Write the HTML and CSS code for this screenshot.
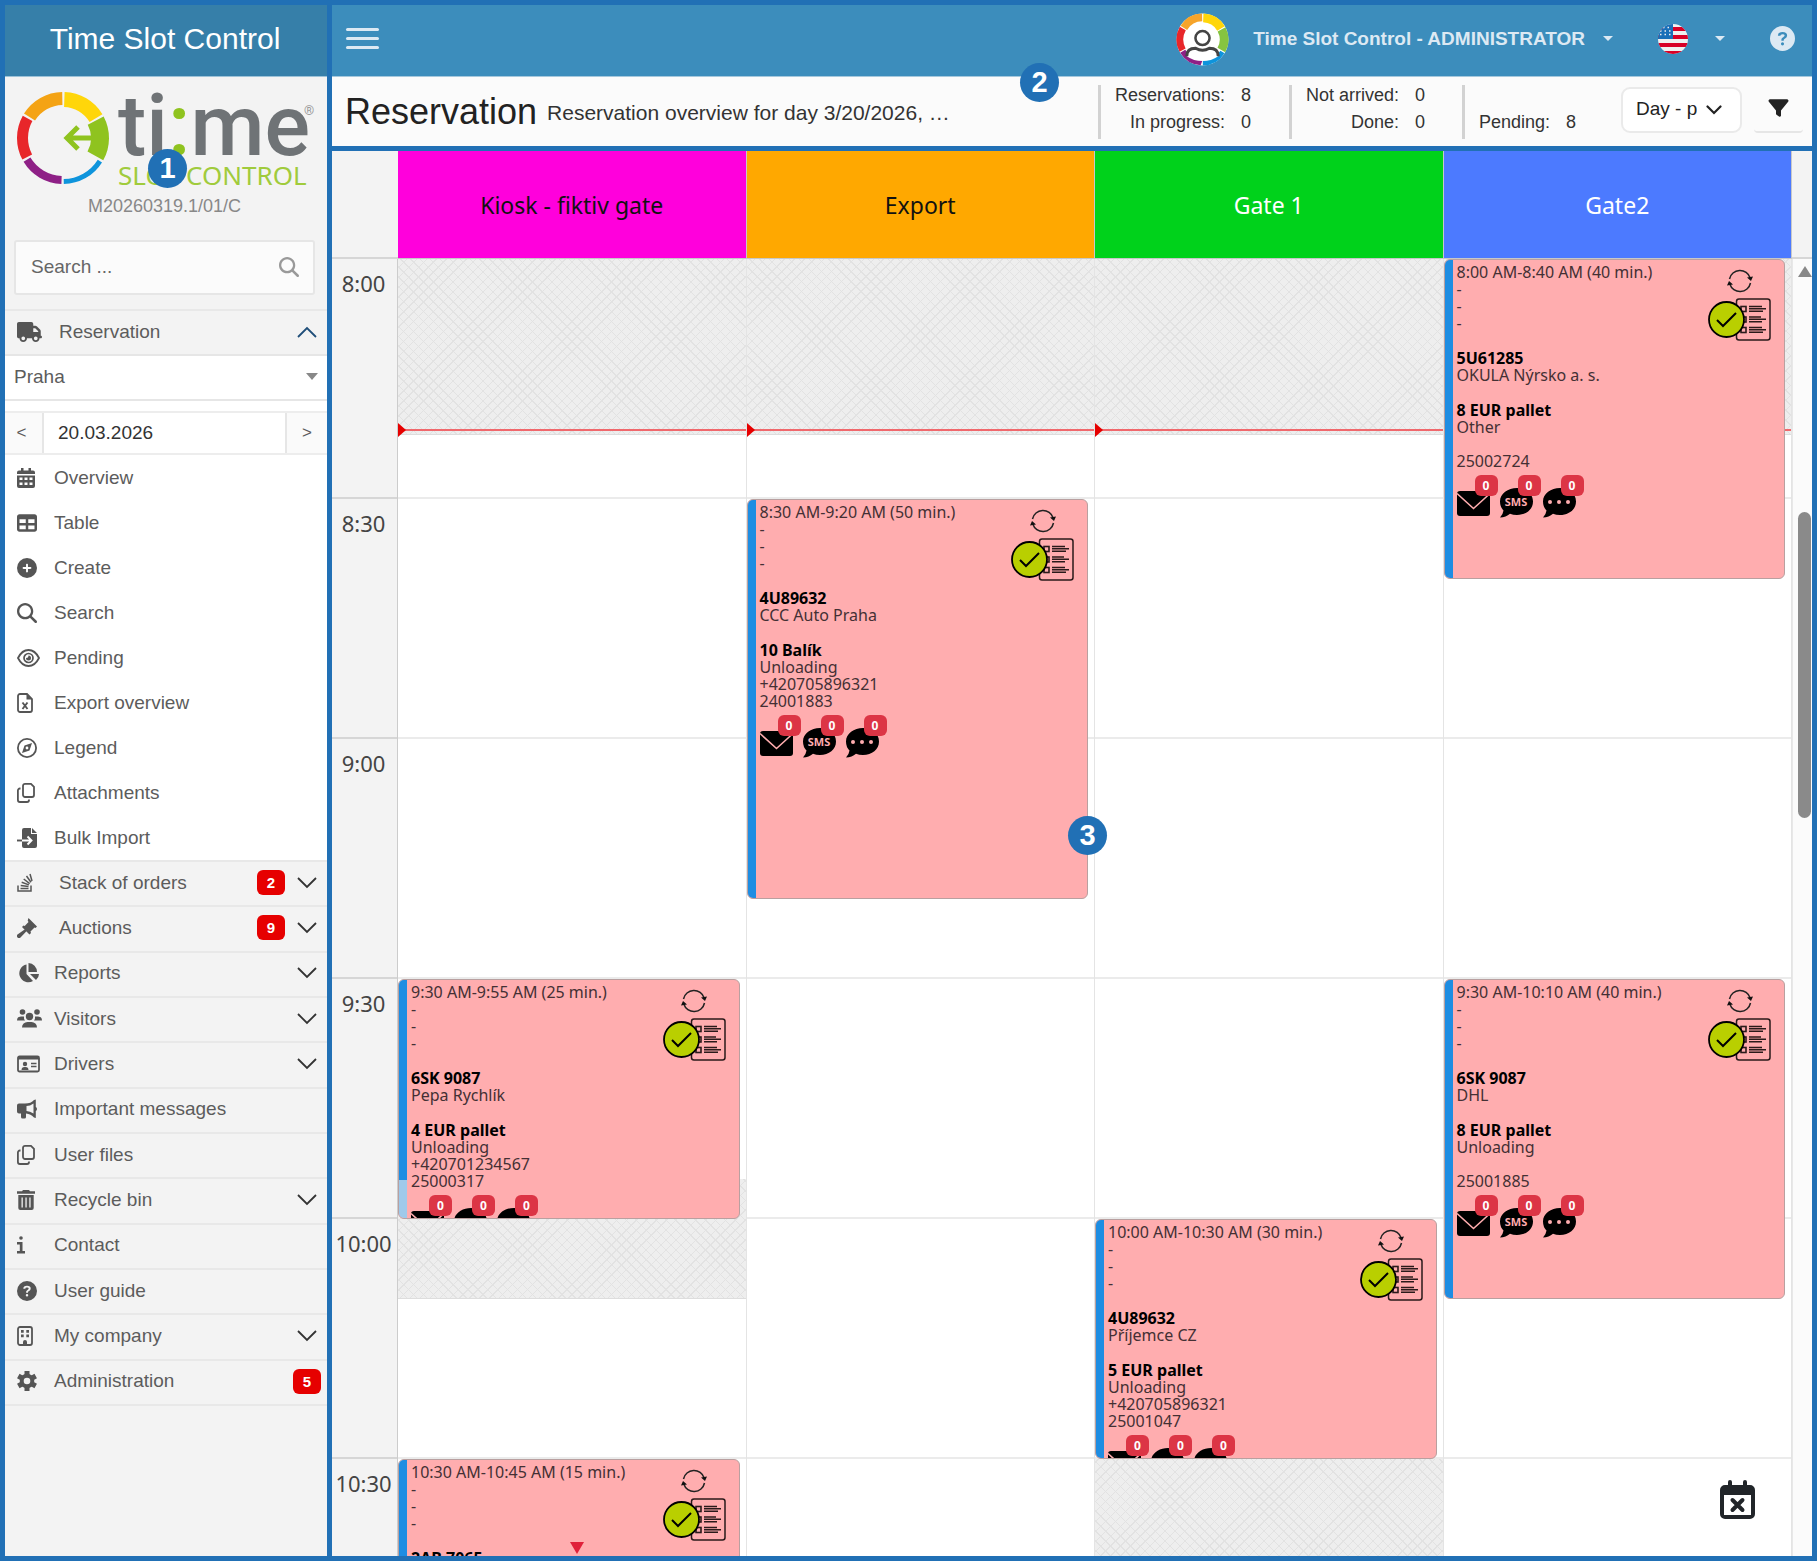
FILE: index.html
```html
<!DOCTYPE html>
<html lang="en">
  <head>
    <meta charset="UTF-8" />
    <meta name="viewport" content="width=device-width, initial-scale=1" />
    <title>Time Slot Control</title>
    <link rel="stylesheet" href="styles.css">
  </head>
  <body>
    <!-- Icon sprite -->
    <svg class="sprite" aria-hidden="true">
      <symbol id="i-truck" viewBox="0 0 640 512" preserveAspectRatio="xMinYMid"><path d="M48 0C21.5 0 0 21.5 0 48V368c0 26.5 21.5 48 48 48H64c0 53 43 96 96 96s96-43 96-96H384c0 53 43 96 96 96s96-43 96-96h32c17.7 0 32-14.3 32-32s-14.3-32-32-32V237.3c0-17-6.7-33.3-18.7-45.3L512 114.7c-12-12-28.3-18.7-45.3-18.7H416V48c0-26.5-21.5-48-48-48H48zM416 160h50.7L544 237.3V256H416V160zM112 416a48 48 0 1 1 96 0 48 48 0 1 1-96 0zm368-48a48 48 0 1 1 0 96 48 48 0 1 1 0-96z"/></symbol>
      <symbol id="i-calendar" viewBox="0 0 18 20" preserveAspectRatio="xMinYMid"><path fill-rule="evenodd" d="M4 0h2.500v2.500h5V0H14v2.500h2a2 2 0 0 1 2 2V6H0V4.500a2 2 0 0 1 2-2h2zM0 7.500h18V18a2 2 0 0 1-2 2H2a2 2 0 0 1-2-2zM2.500 9.500v2.500h3V9.500zm5 0v2.500h3V9.500zm5 0v2.500h3V9.500zm-10 5V17h3v-2.500zm5 0V17h3v-2.500zm5 0V17h3v-2.500z"/></symbol>
      <symbol id="i-table" viewBox="0 0 512 512" preserveAspectRatio="xMinYMid"><path d="M64 256V160H224v96H64zm0 64H224v96H64V320zm224 96V320H448v96H288zM448 256H288V160H448v96zM64 32C28.700 32 0 60.700 0 96V416c0 35.300 28.700 64 64 64H448c35.300 0 64-28.700 64-64V96c0-35.300-28.700-64-64-64H64z"/></symbol>
      <symbol id="i-plus" viewBox="0 0 512 512" preserveAspectRatio="xMinYMid"><path d="M256 512A256 256 0 1 0 256 0a256 256 0 1 0 0 512zM232 344V280H168c-13.300 0-24-10.700-24-24s10.700-24 24-24h64V168c0-13.300 10.700-24 24-24s24 10.700 24 24v64h64c13.300 0 24 10.700 24 24s-10.700 24-24 24H280v64c0 13.300-10.700 24-24 24s-24-10.700-24-24z"/></symbol>
      <symbol id="i-search" viewBox="0 0 512 512" preserveAspectRatio="xMinYMid"><path d="M416 208c0 45.900-14.900 88.300-40 122.700L502.600 457.400c12.500 12.500 12.500 32.800 0 45.300s-32.800 12.500-45.300 0L330.700 376c-34.400 25.200-76.800 40-122.700 40C93.100 416 0 322.900 0 208S93.100 0 208 0S416 93.100 416 208zM208 358a150 150 0 1 0 0-300 150 150 0 1 0 0 300z"/></symbol>
      <symbol id="i-eye" viewBox="0 0 23 20" preserveAspectRatio="xMinYMid"><path d="M1 10Q5 2 11.500 2T22 10Q18 18 11.500 18T1 10z" fill="none" stroke="currentColor" stroke-width="1.800"/><circle cx="11.500" cy="10" r="4.500" fill="none" stroke="currentColor" stroke-width="1.700"/><path d="M11.500 7.500a2.500 2.500 0 1 1-2.500 2.500q2.500 0 2.500-2.500z"/></symbol>
      <symbol id="i-excel" viewBox="0 0 16 20" preserveAspectRatio="xMinYMid"><path d="M3 1h7l5 5v11a2 2 0 0 1-2 2H3a2 2 0 0 1-2-2V3a2 2 0 0 1 2-2z" fill="none" stroke="currentColor" stroke-width="1.800"/><path d="M9.500 1v5.500H15z"/><path d="M5.500 9.500l5 6.500M10.500 9.500l-5 6.500" stroke="currentColor" stroke-width="1.900"/></symbol>
      <symbol id="i-compass" viewBox="0 0 20 20" preserveAspectRatio="xMinYMid"><circle cx="10" cy="10" r="9.100" fill="none" stroke="currentColor" stroke-width="1.800"/><path fill-rule="evenodd" d="M15 5l-2.500 7.500L5 15l2.500-7.500zM10 8.600a1.400 1.400 0 1 0 0 2.800 1.400 1.400 0 0 0 0-2.800z"/></symbol>
      <symbol id="i-copy" viewBox="0 0 18 20" preserveAspectRatio="xMinYMid"><path d="M8 .9h6l3 3V12a2 2 0 0 1-2 2H8a2 2 0 0 1-2-2V2.900a2 2 0 0 1 2-2zM3.500 5.500H2.900a2 2 0 0 0-2 2V17a2 2 0 0 0 2 2H10a2 2 0 0 0 2-2v-.5" fill="none" stroke="currentColor" stroke-width="1.800"/></symbol>
      <symbol id="i-import" viewBox="0 0 20 20" preserveAspectRatio="xMinYMid"><path d="M7 0h7v6h6v12a2 2 0 0 1-2 2H7a2 2 0 0 1-2-2V2a2 2 0 0 1 2-2zM15 0l5 5h-5z"/><path d="M5 12.500h9M10.500 8.500l4 4-4 4" fill="none" stroke="#fff" stroke-width="1.900"/><path d="M0 12.500h5" stroke="currentColor" stroke-width="1.900"/></symbol>
      <symbol id="i-stack" viewBox="0 0 16 20" preserveAspectRatio="xMinYMid"><path d="M1 12.500V18h13v-5.500M3.500 15.500h8M3.700 12.500l7.800 1M4.700 9.200l7.200 2.700M6.700 6l6 4.600M9.500 3l4.500 6.200M13 1l2 7" fill="none" stroke="currentColor" stroke-width="1.500"/></symbol>
      <symbol id="i-gavel" viewBox="0 0 20 20" preserveAspectRatio="xMinYMid"><path d="M11.500 0l8.500 8.500-1.500 1.500-1-.5-4 4 .5 1.500-1.500 1.500L5 9l1.500-1.500 1.200.5 3.800-4-.8-1.500zM8 11.200L9.700 13 3.500 19.500a1.800 1.800 0 0 1-3-3z"/></symbol>
      <symbol id="i-pie" viewBox="0 0 22 20" preserveAspectRatio="xMinYMid"><path d="M9.500 1.500V11l6.500 7A9 9 0 1 1 9.500 1.500zM11.500 0A9 9 0 0 1 20 9h-8.500zM13 11h9a8 8 0 0 1-3 6z"/></symbol>
      <symbol id="i-users" viewBox="0 0 25 20" preserveAspectRatio="xMinYMid"><circle cx="5.500" cy="3" r="2.800"/><circle cx="20" cy="3" r="2.800"/><circle cx="12.500" cy="7.500" r="3.700"/><path d="M0 11.500a4 4 0 0 1 4-4h3a5 5 0 0 0 1 4zM25 11.500a4 4 0 0 0-4-4h-3a5 5 0 0 1-1 4zM5 18.500a5.500 5.500 0 0 1 5.500-5.500h4a5.500 5.500 0 0 1 5.500 5.500z"/></symbol>
      <symbol id="i-card" viewBox="0 0 23 20" preserveAspectRatio="xMinYMid"><rect x="1" y="2.500" width="21" height="15" rx="1.500" fill="none" stroke="currentColor" stroke-width="1.800"/><path d="M1 2.500h21v3H1zM4.500 16a3 3 0 0 1 3-3h1a3 3 0 0 1 3 3z"/><circle cx="8" cy="10" r="2.200"/><path d="M14 9.500h5.500M14 12.500h5.500" stroke="currentColor" stroke-width="1.500"/></symbol>
      <symbol id="i-horn" viewBox="0 0 20 20" preserveAspectRatio="xMinYMid"><path fill-rule="evenodd" d="M17 1l1.800-.5V8q1.200.5 1.200 2t-1.200 2v7L17 18.500q-3-3.500-8-4V18a1.500 1.500 0 0 1-1.500 1.500h-2A1.500 1.500 0 0 1 4 18v-3.500H2a2 2 0 0 1-2-2V6.500a2 2 0 0 1 2-2h6q6 0 9-3.500zm-.5 3.500Q13 7 9.500 7v5q3.500 0 7 2.500z"/></symbol>
      <symbol id="i-trash" viewBox="0 0 18 20" preserveAspectRatio="xMinYMid"><path fill-rule="evenodd" d="M6 0h6l1 1.300h5v2.500H0V1.300h5zM1.300 5h15.400v13a2 2 0 0 1-2 2H3.300a2 2 0 0 1-2-2zM4.500 7.500v10h1.300v-10zm3.900 0v10h1.300v-10zm3.900 0v10h1.300v-10z"/></symbol>
      <symbol id="i-info" viewBox="0 0 8 20" preserveAspectRatio="xMinYMid"><circle cx="4" cy="3" r="1.800"/><path d="M0 7h5.500v9H8v2.500H0V16h2.800V9.500H0z"/></symbol>
      <symbol id="i-help" viewBox="0 0 20 20" preserveAspectRatio="xMinYMid"><path fill-rule="evenodd" d="M10 0a10 10 0 1 1 0 20 10 10 0 0 1 0-20zM6.300 7.800h2q0-1.300 1.700-1.300t1.700 1.100q0 .7-1.200 1.300-1.400.8-1.400 1.900v.9H11v-.6q0-.5 1.100-1.100 1.600-1 1.600-2.500Q13.700 4.700 10 4.700T6.300 7.800zM10 13a1.200 1.200 0 1 0 0 2.500 1.200 1.200 0 0 0 0-2.500z"/></symbol>
      <symbol id="i-building" viewBox="0 0 16 20" preserveAspectRatio="xMinYMid"><rect x="1" y="1" width="14" height="18" rx="2" fill="none" stroke="currentColor" stroke-width="1.800"/><path d="M4 4h2.700v2.700H4zM9.300 4H12v2.700H9.300zM4 8.500h2.700v2.700H4zM9.300 8.500H12v2.700H9.300zM6 19v-3a2 2 0 0 1 4 0v3z"/></symbol>
      <symbol id="i-gear" viewBox="0 0 20 20" preserveAspectRatio="xMinYMid"><circle cx="10" cy="10" r="5.300" fill="none" stroke="currentColor" stroke-width="4"/><path d="M10 0v4M10 16v4M1.300 5l3.500 2M15.200 13l3.500 2M18.700 5l-3.500 2M4.800 13l-3.500 2" stroke="currentColor" stroke-width="5"/></symbol>
      <symbol id="i-filter" viewBox="0 0 512 512"><path d="M3.900 54.900C10.500 40.900 24.500 32 40 32H472c15.500 0 29.500 8.900 36.100 22.900s4.600 30.500-5.200 42.500L320 320.900V448c0 12.100-6.800 23.200-17.700 28.600s-23.800 4.300-33.500-3l-64-48c-8.100-6-12.800-15.500-12.800-25.600V320.900L9 97.300C-.7 85.400-2.800 68.800 3.900 54.900z"/></symbol>
      <symbol id="i-chevron" viewBox="0 0 20 12"><path d="M1 1l9 9 9-9" fill="none" stroke="currentColor" stroke-width="1.800"/></symbol>
      <symbol id="i-chevron-bold" viewBox="0 0 16 10"><path d="M1.500 1.500L8 8l6.500-6.500" fill="none" stroke="currentColor" stroke-width="2.200" stroke-linecap="round"/></symbol>
      <symbol id="i-refresh" viewBox="0 0 26 24"><path d="M2.500 10A10.700 10.700 0 0 1 23.200 9M23.500 14A10.700 10.700 0 0 1 2.800 15" fill="none" stroke="#222" stroke-width="1.500"/><path d="M20 8.500l6-1-2 4.500zM6 15.500l-6 1L2 12z" fill="#111"/></symbol>
      <symbol id="i-checklist" viewBox="0 0 63 43"><rect x="28.500" y="1" width="33.500" height="41" rx="2.500" fill="none" stroke="#2a1a1a" stroke-width="1.500"/><g fill="none" stroke="#2a1a1a" stroke-width="1.600"><rect x="33" y="8.500" width="5" height="5"/><rect x="33" y="19" width="5" height="5"/><rect x="33" y="29.500" width="5" height="5"/><path d="M41 8.500h13M41 10.800h17M41 13.200h14M41 19h12M41 21.300h17M41 23.700h13M41 29.500h13M41 31.800h17M41 34.200h14"/></g><circle cx="18.500" cy="21.500" r="17.500" fill="#b9cf00" stroke="#000" stroke-width="1.800"/><path d="M9 22l6 6 13-13" fill="none" stroke="#000" stroke-width="2"/></symbol>
      <symbol id="i-mail" viewBox="0 0 33 30"><rect y="3" width="33" height="25" rx="3"/><path d="M0 5.500l16.500 15L33 5.500" fill="none" stroke="#ffadaf" stroke-width="1.600"/></symbol>
      <symbol id="i-bubble" viewBox="0 0 33 30"><path d="M17 0c9 0 16 5.500 16 13.500S26 27 17 27q-4 0-7-1.200Q6 29.500 0 29.500q3-3 3.500-7Q0 19 0 13.500C0 5.500 8 0 17 0z"/></symbol>
    </svg>

    <div class="app">
      <nav class="sidebar">
        <div class="brand">Time Slot Control</div>
        <div class="identity">
          <svg class="logo" viewBox="0 0 298 100" role="img" aria-label="time slot control">
            <g transform="translate(46 48)" fill="none">
              <circle r="38.500" stroke="#ffd60a" stroke-width="15" pathLength="360" stroke-dasharray="57 303" transform="rotate(-88)"/>
              <circle r="37" stroke="#8fc31f" stroke-width="18" pathLength="360" stroke-dasharray="57 303" transform="rotate(-28)"/>
              <circle r="43.500" stroke="#0e94dc" stroke-width="5" pathLength="360" stroke-dasharray="57 303" transform="rotate(32)"/>
              <circle r="42" stroke="#8e2086" stroke-width="8" pathLength="360" stroke-dasharray="57 303" transform="rotate(92)"/>
              <circle r="40.500" stroke="#e8262a" stroke-width="11" pathLength="360" stroke-dasharray="57 303" transform="rotate(152)"/>
              <circle r="39.500" stroke="#f4a314" stroke-width="13" pathLength="360" stroke-dasharray="57 303" transform="rotate(212)"/>
              <path d="M32 0H5M15-11L4 0l11 11" stroke="#8fc31f" stroke-width="5"/>
            </g>
            <text class="logo-name" x="101" y="65">ti<tspan class="logo-colon">:</tspan>me</text>
            <text class="logo-reg" x="287" y="25">®</text>
            <text class="logo-sub" x="101" y="95">SLOT CONTROL</text>
          </svg>
          <div class="version">M20260319.1/01/C</div>
          <label class="search">
            <input type="text" placeholder="Search ..." aria-label="Search" />
            <svg class="icon"><use href="#i-search"/></svg>
          </label>
        </div>

        <a class="nav-row open" href="#"><svg class="icon"><use href="#i-truck"/></svg><span class="wide">Reservation</span><svg class="chevron up"><use href="#i-chevron"/></svg></a>
        <div class="panel">
          <div class="place">
            <select aria-label="Place"><option>Praha</option></select>
          </div>
          <div class="date">
            <button>&lt;</button>
            <input type="text" value="20.03.2026" aria-label="Date" />
            <button>&gt;</button>
          </div>
          <a class="sub-row" href="#"><svg class="icon"><use href="#i-calendar"/></svg><span>Overview</span></a>
          <a class="sub-row" href="#"><svg class="icon"><use href="#i-table"/></svg><span>Table</span></a>
          <a class="sub-row" href="#"><svg class="icon"><use href="#i-plus"/></svg><span>Create</span></a>
          <a class="sub-row" href="#"><svg class="icon"><use href="#i-search"/></svg><span>Search</span></a>
          <a class="sub-row" href="#"><svg class="icon"><use href="#i-eye"/></svg><span>Pending</span></a>
          <a class="sub-row" href="#"><svg class="icon"><use href="#i-excel"/></svg><span>Export overview</span></a>
          <a class="sub-row" href="#"><svg class="icon"><use href="#i-compass"/></svg><span>Legend</span></a>
          <a class="sub-row" href="#"><svg class="icon"><use href="#i-copy"/></svg><span>Attachments</span></a>
          <a class="sub-row" href="#"><svg class="icon"><use href="#i-import"/></svg><span>Bulk Import</span></a>
        </div>
        <div class="groups">
          <a class="nav-row" href="#"><svg class="icon"><use href="#i-stack"/></svg><span class="wide">Stack of orders</span><b class="count">2</b><svg class="chevron"><use href="#i-chevron"/></svg></a>
          <a class="nav-row" href="#"><svg class="icon"><use href="#i-gavel"/></svg><span class="wide">Auctions</span><b class="count">9</b><svg class="chevron"><use href="#i-chevron"/></svg></a>
          <a class="nav-row" href="#"><svg class="icon"><use href="#i-pie"/></svg><span>Reports</span><svg class="chevron"><use href="#i-chevron"/></svg></a>
          <a class="nav-row" href="#"><svg class="icon"><use href="#i-users"/></svg><span>Visitors</span><svg class="chevron"><use href="#i-chevron"/></svg></a>
          <a class="nav-row" href="#"><svg class="icon"><use href="#i-card"/></svg><span>Drivers</span><svg class="chevron"><use href="#i-chevron"/></svg></a>
          <a class="nav-row" href="#"><svg class="icon"><use href="#i-horn"/></svg><span>Important messages</span></a>
          <a class="nav-row" href="#"><svg class="icon"><use href="#i-copy"/></svg><span>User files</span></a>
          <a class="nav-row" href="#"><svg class="icon"><use href="#i-trash"/></svg><span>Recycle bin</span><svg class="chevron"><use href="#i-chevron"/></svg></a>
          <a class="nav-row" href="#"><svg class="icon"><use href="#i-info"/></svg><span>Contact</span></a>
          <a class="nav-row" href="#"><svg class="icon"><use href="#i-help"/></svg><span>User guide</span></a>
          <a class="nav-row" href="#"><svg class="icon"><use href="#i-building"/></svg><span>My company</span><svg class="chevron"><use href="#i-chevron"/></svg></a>
          <a class="nav-row end" href="#"><svg class="icon"><use href="#i-gear"/></svg><span>Administration</span><b class="count">5</b></a>
        </div>
        <div class="marker m1">1</div>
      </nav>

      <main class="main">
        <div class="top">
          <header class="topbar">
            <button class="menu" aria-label="Menu"><i></i><i></i><i></i></button>
            <svg class="avatar" viewBox="-27 -27 54 54">
              <circle r="26.500" fill="#fff"/>
              <g fill="none" stroke-width="9">
                <circle r="22" stroke="#ffd60a" pathLength="360" stroke-dasharray="57 303" transform="rotate(-88)"/>
                <circle r="22" stroke="#86c440" pathLength="360" stroke-dasharray="57 303" transform="rotate(-28)"/>
                <circle r="24" stroke="#0e94dc" stroke-width="5" pathLength="360" stroke-dasharray="57 303" transform="rotate(32)"/>
                <circle r="23.500" stroke="#8e2086" stroke-width="6" pathLength="360" stroke-dasharray="57 303" transform="rotate(92)"/>
                <circle r="23" stroke="#e8262a" stroke-width="7" pathLength="360" stroke-dasharray="57 303" transform="rotate(152)"/>
                <circle r="22.500" stroke="#f6a42a" stroke-width="8" pathLength="360" stroke-dasharray="57 303" transform="rotate(212)"/>
              </g>
              <path d="M-16 17C-16 10-11 9-7 9Q0 13 7 9C11 9 16 10 16 17Q9 22 0 22T-16 17z" fill="#fff"/>
              <path d="M-16 17C-16 10-11 9-7 9Q0 13 7 9C11 9 16 10 16 17" fill="none" stroke="#444" stroke-width="3"/>
              <circle cy="-1.500" r="7.200" fill="#fff" stroke="#444" stroke-width="2.600"/>
            </svg>
            <a class="user" href="#">Time Slot Control - ADMINISTRATOR <i class="caret"></i></a>
            <a class="lang" href="#" aria-label="Language">
              <svg class="flag" viewBox="0 0 30 30">
                <clipPath id="round"><circle cx="15" cy="15" r="15"/></clipPath>
                <g clip-path="url(#round)">
                  <path fill="#f0f0f0" d="M0 0h30v30H0z"/>
                  <path stroke="#d80027" stroke-width="4" d="M0 5h30M0 13h30M0 21h30M0 29h30"/>
                  <path fill="#1a6fb8" d="M0 0h15v15H0z"/>
                  <path stroke="#f0f0f0" stroke-width="1.500" stroke-dasharray="1.500 3" d="M2 7h12M5 3.500h9M2 10.500h12"/>
                </g>
              </svg>
              <i class="caret"></i>
            </a>
            <a class="help" href="#" aria-label="Help"><svg><use href="#i-help"/></svg></a>
          </header>
          <div class="subbar">
            <h1>Reservation</h1>
            <p class="subtitle">Reservation overview for day 3/20/2026, …</p>
            <dl class="stats s1">
              <dt>Reservations:</dt><dd>8</dd>
              <dt>In progress:</dt><dd>0</dd>
            </dl>
            <dl class="stats s2">
              <dt>Not arrived:</dt><dd>0</dd>
              <dt>Done:</dt><dd>0</dd>
            </dl>
            <dl class="stats s3">
              <dt>Pending:</dt><dd>8</dd>
            </dl>
            <div class="view">
              <select aria-label="View"><option>Day - places</option></select>
              <svg><use href="#i-chevron-bold"/></svg>
            </div>
            <button class="filter" aria-label="Filter"><svg><use href="#i-filter"/></svg></button>
          </div>
          <div class="marker m2">2</div>
        </div>

        <section class="calendar">
          <div class="cal-head">
            <div class="corner"></div>
            <div class="gate kiosk">Kiosk - fiktiv gate</div>
            <div class="gate export">Export</div>
            <div class="gate gate1">Gate 1</div>
            <div class="gate gate2">Gate2</div>
            <div class="corner-end"></div>
          </div>
          <div class="cal-body">
            <div class="times">
              <div>8:00</div>
              <div>8:30</div>
              <div>9:00</div>
              <div>9:30</div>
              <div>10:00</div>
              <div>10:30</div>
            </div>
            <div class="col"></div>
            <div class="col"></div>
            <div class="col"></div>
            <div class="col"></div>
            <div class="scroll">
              <i class="arrow-up"></i>
              <div class="thumb"></div>
              <i class="arrow-down"></i>
            </div>
          </div>
          <i class="more"></i>
          <button class="no-slot" aria-label="Close day">
            <svg viewBox="0 0 35 39"><path fill-rule="evenodd" d="M8 2a2 2 0 0 1 4 0v3h11V2a2 2 0 0 1 4 0v3h3a5 5 0 0 1 5 5v24a5 5 0 0 1-5 5H5a5 5 0 0 1-5-5V10a5 5 0 0 1 5-5h3zM4 15v20h27V15z"/><path d="M12.500 20l10 10M22.500 20l-10 10" stroke="currentColor" stroke-width="4" stroke-linecap="round"/></svg>
          </button>
          <div class="marker m3">3</div>
        </section>
      </main>
    </div>

    <script src="script.js"></script>
  </body>
</html>
```
FILE: styles.css
```css
* {
  box-sizing: border-box;
}
body {
  margin: 0;
  font-family: "Liberation Sans", Arial, sans-serif;
  font-size: 19px;
  color: #222;
}
a {
  color: inherit;
  text-decoration: none;
}
button,
input,
select {
  font: inherit;
  color: inherit;
  margin: 0;
  border: 0;
  outline: 0;
  background: none;
  appearance: none;
}
.sprite {
  display: none;
}
svg {
  fill: currentColor;
}

/* the blue frame is the background showing through the gaps */
.app {
  display: grid;
  grid-template-columns: 322px minmax(0, 1fr);
  gap: 5px;
  height: 100vh;
  padding: 5px;
  background: #2170b5;
  overflow: hidden;
}

/* Sidebar */
.sidebar {
  position: relative;
  background: #f3f3f3;
  color: #5c5c5c;
  overflow: hidden;
}
.brand {
  height: 72px;
  line-height: 68px;
  padding-right: 2px;
  text-align: center;
  font-size: 30px;
  color: #fff;
  background: #367fa9;
  border-bottom: 1px solid #9cc2d8;
}
.identity {
  height: 232px;
  padding: 13px 12px 0 9px;
}
.logo {
  display: block;
  width: 298px;
  height: 100px;
  margin-left: 3px;
}
.logo-name {
  font: 500 85px Roboto, sans-serif;
  fill: #6f7376;
}
.logo-colon {
  fill: #8fc31f;
}
.logo-reg {
  font: 13px Roboto, sans-serif;
  fill: #999;
}
.logo-sub {
  font: 26px "Noto Sans", sans-serif;
  fill: #a0cb3c;
}
.version {
  margin-top: 6px;
  line-height: 20px;
  text-align: center;
  font-size: 18px;
  color: #888;
}
.search {
  display: flex;
  align-items: center;
  height: 55px;
  margin-top: 24px;
  padding: 0 14px 2px 15px;
  border: 2px solid #e6e6e6;
  border-radius: 3px;
  background: #fbfbfb;
}
.search input {
  flex: 1;
  min-width: 0;
  padding: 0;
}
.search input::placeholder {
  color: #666;
}
.search .icon {
  width: 20px;
  color: #999;
}
.icon {
  flex: none;
  width: 26px;
  height: 20px;
  color: #555;
}
.nav-row,
.sub-row {
  display: flex;
  align-items: center;
  height: 45px;
  padding: 0 10px 2px 12px;
}
.sub-row {
  padding-bottom: 0;
}
.nav-row span,
.sub-row span {
  flex: 1;
  padding-left: 11px;
}
.nav-row span.wide {
  padding-left: 16px;
}
.nav-row {
  height: auto;
  border-top: 2px solid #e8e8e8;
}
.nav-row.open {
  height: 45px;
}
.nav-row.end {
  padding-right: 6px;
}
.chevron {
  width: 20px;
  height: 12px;
  color: #333;
}
.chevron.up {
  transform: rotate(180deg);
  color: #1f4e79;
}
.count {
  width: 28px;
  height: 25px;
  margin-right: 12px;
  border-radius: 6px;
  background: #e60000;
  color: #fff;
  font-size: 15px;
  line-height: 25px;
  text-align: center;
}
.end .count {
  margin-right: 0;
}
.panel {
  background: #fff;
  border-top: 2px solid #e6e6e6;
}
.place {
  position: relative;
  height: 45px;
  border-bottom: 2px solid #e6e6e6;
}
.place select {
  width: 100%;
  height: 100%;
  padding: 0 30px 2px 9px;
}
.place::after {
  content: "";
  position: absolute;
  right: 9px;
  top: 17px;
  border: 6px solid transparent;
  border-top: 7px solid #888;
  border-bottom: 0;
  pointer-events: none;
}
.date {
  display: flex;
  height: 44px;
  margin-top: 10px;
  border-top: 2px solid #ededed;
  border-bottom: 2px solid #ededed;
}
.date button {
  width: 39px;
  padding: 0 4px 0 0;
  font-size: 17px;
  background: #fafafa;
  border-right: 2px solid #e6e6e6;
}
.date button:last-child {
  width: 42px;
  padding: 0;
  border-right: 0;
  border-left: 2px solid #e6e6e6;
}
.date input {
  flex: 1;
  min-width: 0;
  padding: 0 14px;
  color: #333;
}
.groups {
  display: grid;
  grid-auto-rows: 1fr;
  height: 546px;
  border-bottom: 2px solid #e8e8e8;
}

/* Top bar */
.main {
  display: flex;
  flex-direction: column;
  gap: 5px;
  min-height: 0;
}
.top {
  position: relative;
}
.topbar {
  display: flex;
  align-items: center;
  height: 72px;
  padding: 0 17px 4px 14px;
  background: #3c8dbc;
  border-bottom: 1px solid #a5c8dd;
  color: #dce9f3;
}
.menu {
  display: flex;
  flex-direction: column;
  gap: 6px;
  width: 33px;
  padding: 0;
  margin-right: auto;
}
.menu i {
  width: 33px;
  height: 3px;
  border-radius: 2px;
  background: #dce9f3;
}
.avatar {
  width: 53px;
  height: 53px;
  margin: 2px 24px 0 0;
}
.user {
  display: flex;
  align-items: center;
  gap: 18px;
  font-weight: bold;
}
.caret {
  border: 5px solid transparent;
  border-top-color: currentColor;
  border-bottom: 0;
}
.lang {
  display: flex;
  align-items: center;
  gap: 27px;
  margin: 0 45px;
}
.flag {
  width: 30px;
  height: 30px;
}
.help svg {
  display: block;
  width: 25px;
  height: 25px;
}
.subbar {
  display: flex;
  align-items: center;
  height: 69px;
  padding: 0 9px 0 13px;
  background: #fbfbfb;
}
h1 {
  margin: 0 10px 0 0;
  font-size: 36px;
  font-weight: normal;
}
.subtitle {
  flex: 1;
  margin: 2px 0 0;
  font-size: 21px;
  white-space: nowrap;
  color: #333;
}
.stats {
  display: grid;
  grid-template-columns: auto auto;
  align-content: end;
  justify-content: start;
  column-gap: 16px;
  height: 54px;
  margin: 0;
  padding: 0 0 3px 14px;
  border-left: 3px solid #d2d2d2;
  font-size: 18px;
  line-height: 27px;
  text-align: right;
  color: #333;
}
.stats dd {
  margin: 0;
}
.s1 {
  width: 191px;
}
.s2 {
  width: 173px;
}
.s3 {
  width: 159px;
}
.view {
  position: relative;
  width: 121px;
  height: 46px;
  margin: 0 12px 4px 0;
  border: 2px solid #eaeaea;
  border-radius: 9px;
  background: #fff;
}
.view select {
  width: 100%;
  height: 100%;
  padding: 0 43px 2px 13px;
}
.view svg {
  position: absolute;
  right: 18px;
  top: 16px;
  width: 16px;
  height: 10px;
  pointer-events: none;
}
.filter {
  width: 49px;
  height: 46px;
  margin-bottom: 4px;
  padding: 4px 0 0;
  border-bottom: 2px solid #e6e6e6;
  border-radius: 4px;
}
.filter svg {
  width: 21px;
  height: 20px;
}

/* Calendar */
.calendar {
  position: relative;
  flex: 1;
  display: flex;
  flex-direction: column;
  min-height: 0;
  background: #fff;
  overflow: hidden;
  font-family: "Noto Sans", "Open Sans", sans-serif;
}
.cal-head,
.cal-body {
  display: grid;
  grid-template-columns: 66px repeat(4, minmax(0, 1fr)) 20px;
}
.cal-head {
  height: 108px;
}
.cal-body {
  flex: 1;
  min-height: 0;
  overflow: hidden;
}
.corner,
.corner-end {
  background: #f3f3f3;
  border-bottom: 2px solid #d6d6d6;
}
.gate {
  display: flex;
  align-items: center;
  justify-content: center;
  border-right: 1px solid #c8c8c8;
  border-bottom: 1px solid #c8c8c8;
  font-size: 23px;
  color: #111;
}
.kiosk {
  background: #ff00dc;
}
.export {
  background: #ffa800;
}
.gate1 {
  background: #00d21b;
  color: #fff;
}
.gate2 {
  background: #4c7aff;
  color: #fff;
}
.times {
  background: #f3f3f3;
  border-right: 1px solid #ccc;
}
.times div {
  height: 240px;
  padding: 9px 2px 0 0;
  text-align: center;
  font-size: 22px;
  line-height: 30px;
  color: #444;
  border-bottom: 2px solid #d6d6d6;
}
.col {
  position: relative;
  border-right: 1px solid #e4e4e4;
  background: repeating-linear-gradient(#fff 0 238px, #ebebeb 238px 240px);
}
.closed {
  position: absolute;
  left: 0;
  right: 0;
  border-bottom: 1px solid #ddd;
  background:
    repeating-linear-gradient(45deg, transparent 0 6px, #e2e2e2 6px 7px),
    repeating-linear-gradient(-45deg, transparent 0 6px, #e2e2e2 6px 7px),
    #eee;
}
.now {
  position: absolute;
  left: 0;
  right: 0;
  border-top: 2px solid #f0686c;
}
.now::before {
  content: "";
  position: absolute;
  left: 0;
  top: -8px;
  border: 7px solid transparent;
  border-left: 8px solid #e60000;
  border-right: 0;
}
.event {
  position: absolute;
  left: 0;
  right: 6px;
  padding: 4px 0 0 12px;
  border: 1px solid #b9a0a0;
  border-radius: 6px;
  background: #ffadaf;
  overflow: hidden;
  font-size: 16px;
  line-height: 17px;
  color: #443034;
}
.event .bar {
  position: absolute;
  left: 0;
  top: 0;
  bottom: 0;
  width: 8px;
  background: #9fc9ea;
}
.event .bar i {
  display: block;
  background: #1e8de2;
}
.event .block {
  margin-bottom: 18px;
}
.event .line {
  min-height: 17px;
}
.event .line b {
  color: #000;
}
.status {
  position: absolute;
  right: 13px;
  top: 9px;
  display: flex;
  flex-direction: column;
  align-items: center;
  gap: 5px;
}
.status .refresh {
  width: 26px;
  height: 24px;
}
.status .check {
  width: 63px;
  height: 43px;
}
.notify {
  display: flex;
  gap: 10px;
}
.notify span {
  position: relative;
  width: 33px;
  height: 30px;
  color: #000;
}
.notify svg {
  width: 33px;
  height: 30px;
}
.notify em {
  position: absolute;
  left: 0;
  top: 5px;
  width: 33px;
  text-align: center;
  font-size: 11px;
  font-style: normal;
  font-weight: bold;
  color: #ffadaf;
}
.notify .dots {
  display: flex;
  justify-content: center;
  gap: 5px;
  top: 12px;
}
.notify .dots i {
  width: 4px;
  height: 4px;
  border-radius: 50%;
  background: #ffadaf;
}
.notify b {
  position: absolute;
  left: 18px;
  top: -13px;
  width: 23px;
  height: 21px;
  border-radius: 6px;
  background: #dc3545;
  color: #fff;
  font-size: 12px;
  line-height: 21px;
  text-align: center;
}
.scroll {
  display: flex;
  flex-direction: column;
  align-items: flex-end;
  padding: 7px 0 3px;
  border-left: 1px solid #e8e8e8;
  background: #fbfbfb;
}
.arrow-up,
.arrow-down {
  border: 7px solid transparent;
}
.arrow-up {
  border-top: 0;
  border-bottom: 11px solid #888;
}
.arrow-down {
  border-bottom: 0;
  border-top: 11px solid #888;
}
.thumb {
  width: 13px;
  height: 306px;
  margin: 235px 1px auto 0;
  border-radius: 7px;
  background: #8a8a8a;
}
.more {
  position: absolute;
  left: 238px;
  bottom: 2px;
  border: 7px solid transparent;
  border-top: 12px solid #e0203a;
  border-bottom: 0;
}
.no-slot {
  position: absolute;
  right: 57px;
  bottom: 37px;
  padding: 0;
  color: #212529;
}
.no-slot svg {
  display: block;
  width: 35px;
  height: 39px;
}

/* Numbered markers */
.marker {
  position: absolute;
  width: 39px;
  height: 39px;
  border-radius: 50%;
  background: #2170b5;
  color: #fff;
  font: bold 29px/39px "Liberation Sans", Arial, sans-serif;
  text-align: center;
}
.m1 {
  left: 143px;
  top: 144px;
}
.m2 {
  left: 688px;
  top: 58px;
}
.m3 {
  left: 736px;
  top: 665px;
}
```
FILE: script.js
```js
const DAY_START = 8 * 60;
const PX_PER_MIN = 8;
const NOW = 8 * 60 + 21;

// closed parts of the day, in minutes
const closed = [
  { gate: 0, from: 480, to: 502 },
  { gate: 1, from: 480, to: 502 },
  { gate: 2, from: 480, to: 502 },
  { gate: 3, from: 480, to: 502 },
  { gate: 0, from: 595, to: 610 },
  { gate: 2, from: 630, to: 660 },
];

const events = [
  { gate: 0, from: 570, len: 25, time: '9:30 AM-9:55 AM', plate: '6SK 9087', company: 'Pepa Rychlík', load: '4 EUR pallet', type: 'Unloading', phone: '+420701234567', order: '25000317' },
  { gate: 0, from: 630, len: 15, time: '10:30 AM-10:45 AM', plate: '2AB 7065', company: '', load: '', type: '', phone: '', order: '' },
  { gate: 1, from: 510, len: 50, time: '8:30 AM-9:20 AM', plate: '4U89632', company: 'CCC Auto Praha', load: '10 Balík', type: 'Unloading', phone: '+420705896321', order: '24001883' },
  { gate: 2, from: 600, len: 30, time: '10:00 AM-10:30 AM', plate: '4U89632', company: 'Příjemce CZ', load: '5 EUR pallet', type: 'Unloading', phone: '+420705896321', order: '25001047' },
  { gate: 3, from: 480, len: 40, time: '8:00 AM-8:40 AM', plate: '5U61285', company: 'OKULA Nýrsko a. s.', load: '8 EUR pallet', type: 'Other', phone: '', order: '25002724' },
  { gate: 3, from: 570, len: 40, time: '9:30 AM-10:10 AM', plate: '6SK 9087', company: 'DHL', load: '8 EUR pallet', type: 'Unloading', phone: '', order: '25001885' },
];

const cols = document.querySelectorAll('.col');

function add(gate, html) {
  cols[gate].insertAdjacentHTML('beforeend', html);
}

function offset(min) {
  return (min - DAY_START) * PX_PER_MIN;
}

closed.forEach((c) => {
  add(c.gate, `<div class="closed" style="top:${offset(c.from)}px;height:${offset(c.to) - offset(c.from)}px"></div>`);
});

cols.forEach((col, i) => {
  add(i, `<div class="now" style="top:${offset(NOW) + 2}px"></div>`);
});

events.forEach((e) => {
  // a box covers at least 30 minutes, the blue bar only the booked time
  const height = Math.max(e.len, 30) * PX_PER_MIN;
  add(e.gate, `
    <article class="event" style="top:${offset(e.from)}px;height:${height}px">
      <div class="bar"><i style="height:${e.len * PX_PER_MIN}px"></i></div>
      <div class="status">
        <svg class="refresh"><use href="#i-refresh"/></svg>
        <svg class="check"><use href="#i-checklist"/></svg>
      </div>
      <div class="block">
        <div class="line">${e.time} (${e.len} min.)</div>
        <div class="line">-</div>
        <div class="line">-</div>
        <div class="line">-</div>
      </div>
      <div class="block">
        <div class="line"><b>${e.plate}</b></div>
        <div class="line">${e.company}</div>
      </div>
      <div class="block">
        <div class="line"><b>${e.load}</b></div>
        <div class="line">${e.type}</div>
        <div class="line">${e.phone}</div>
        <div class="line">${e.order}</div>
      </div>
      <div class="notify">
        <span><svg><use href="#i-mail"/></svg><b>0</b></span>
        <span><svg><use href="#i-bubble"/></svg><em>SMS</em><b>0</b></span>
        <span><svg><use href="#i-bubble"/></svg><em class="dots"><i></i><i></i><i></i></em><b>0</b></span>
      </div>
    </article>`);
});
```
